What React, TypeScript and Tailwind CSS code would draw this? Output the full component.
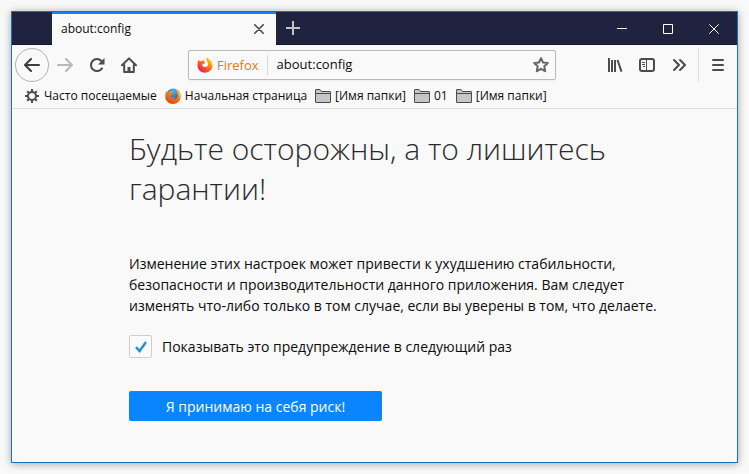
import React, { useState } from "react";

function FirefoxClassicIcon() {
  return (
    <svg viewBox="0 0 16 16" className="size-4 shrink-0" aria-hidden="true">
      <defs>
        <linearGradient id="foxBody" x1="0.8" y1="0" x2="0.3" y2="1">
          <stop offset="0" stopColor="#ffc21a" />
          <stop offset="0.4" stopColor="#f58220" />
          <stop offset="1" stopColor="#d9451c" />
        </linearGradient>
        <radialGradient id="foxGlobe" cx="0.5" cy="0.2" r="0.9">
          <stop offset="0" stopColor="#4fb4ee" />
          <stop offset="1" stopColor="#153a86" />
        </radialGradient>
      </defs>
      <circle cx="8.2" cy="7.4" r="7" fill="url(#foxGlobe)" />
      <path d="M1 3.2 2.4 4.4C3.4 3.6 4.6 3.4 5.6 3.6L7 2.6 6.9 4.3 8.2 5.6 6.5 6.7 5.8 8C6 9.6 8 9.7 9.4 9 10.2 9.1 9.8 10.6 8.4 11.2 11 11.4 13 9.7 12.8 6.8 12.5 4.6 11.5 3 10 1.6 13.6 2.2 15.9 5 15.9 8.4 15.9 12.6 12.3 15.9 8 15.9S.2 12.7.2 8.4C.2 6.4.5 4.8 1 3.2Z" fill="url(#foxBody)" />
      <path d="M13.4 3.6c1.6 2 1.8 4.8.7 7 .1-2.4-.1-4.7-.7-7Z" fill="#ffe04d" />
    </svg>
  );
}

function FirefoxQuantumIcon() {
  return (
    <svg viewBox="0 0 16 16" className="size-4 shrink-0" aria-hidden="true">
      <defs>
        <linearGradient id="flame" x1="0.9" y1="0.1" x2="0.2" y2="0.9">
          <stop offset="0" stopColor="#ffd000" />
          <stop offset="0.45" stopColor="#ff7a1a" />
          <stop offset="1" stopColor="#f0195c" />
        </linearGradient>
      </defs>
      <path d="M1.5 3 3 4.4C3.8 3.9 4.6 3.8 5.4 4L7.2 2.6 7 4.4 8.6 5.6 7 6.8 5.4 7.6C5.2 9.6 7.2 10.6 9 9.9 10.8 9.2 11.6 7.4 10.8 5.6 10.4 4.6 9.6 4 9.4 2.6 9.4 1.6 10 .8 10.6.4 11 2.2 12.8 2.6 14 4.2 16.2 7.2 16 11 13.4 13.6 10.4 16.4 5.4 16.3 2.5 13.4 0 10.8-.1 6.2 1.5 3Z" fill="url(#flame)" />
      <path d="M10.6.4C11 2.2 12.8 2.6 14 4.2c1.2 1.7 1.6 3.6 1.3 5.4C14.6 6.4 12.6 5.6 11.4 4 10.6 2.8 10 1.8 10.6.4Z" fill="#ffc400" />
    </svg>
  );
}

function FolderIcon() {
  return (
    <svg viewBox="0 0 16 14" className="h-3.5 w-4 shrink-0" fill="#c6c6c6" stroke="#4a4a4a" aria-hidden="true">
      <path d="M.5 13V1Q.5.5 1 .5H5L6.5 2.5H15Q15.5 2.5 15.5 3V13Q15.5 13.5 15 13.5H1Q.5 13.5.5 13Z" />
      <path d="M1 4.5H15" fill="none" />
    </svg>
  );
}

function GearIcon() {
  return (
    <svg viewBox="0 0 16 16" className="size-4 shrink-0" fill="none" stroke="#4a4a4a" aria-hidden="true">
      <circle cx="8" cy="8" r="4" strokeWidth="2" />
      <path strokeWidth="2" d="M8 1v2.4M8 12.6V15M1 8h2.4M12.6 8H15M3.2 3.2 4.8 4.8M11.2 11.2l1.6 1.6M12.8 3.2l-1.6 1.6M4.8 11.2l-1.6 1.6" />
    </svg>
  );
}

function ToolButton({ label, className = "", children }: { label: string; className?: string; children: React.ReactNode }) {
  return (
    <button type="button" aria-label={label} className={`flex h-8 w-8 shrink-0 items-center justify-center text-[#4a4a4f] ${className}`}>
      <svg viewBox="0 0 16 16" className="size-4" fill="none" stroke="currentColor" strokeWidth="2" strokeLinecap="round" strokeLinejoin="round" aria-hidden="true">
        {children}
      </svg>
    </button>
  );
}

function CaptionButton({ label, children }: { label: string; children: React.ReactNode }) {
  return (
    <button type="button" aria-label={label} className="flex h-full w-[46px] items-center justify-center pt-px text-white">
      <svg viewBox="0 0 10 10" className="size-2.5" fill="none" stroke="currentColor" aria-hidden="true">
        {children}
      </svg>
    </button>
  );
}

function TabBar() {
  return (
    <div className="flex h-[33px] border-b border-[#15172e] bg-[#202340]">
      <div className="-mb-px ml-10 flex w-56 items-center justify-between border-t-2 border-[#0a84ff] bg-[#f9f9fa] pr-[9px] pb-px pl-[9px]">
        <span className="text-xs text-[#0c0c0d]">about:config</span>
        <button type="button" aria-label="Закрыть вкладку" className="flex size-4 items-center justify-center">
          <svg viewBox="0 0 10 10" className="size-2.5" stroke="#4a4a4f" strokeWidth="1.6" strokeLinecap="round" aria-hidden="true">
            <path d="M.8.8l8.4 8.4M9.2.8.8 9.2" />
          </svg>
        </button>
      </div>
      <button type="button" aria-label="Новая вкладка" className="flex w-[34px] items-center justify-center">
        <svg viewBox="0 0 14 14" className="size-3.5" stroke="#c3c3c6" strokeWidth="2" aria-hidden="true">
          <path d="M7 0v14M0 7h14" />
        </svg>
      </button>
      <div className="ml-auto flex">
        <CaptionButton label="Свернуть"><path d="M0 4.5h10" /></CaptionButton>
        <CaptionButton label="Развернуть"><path d="M.5.5h9v9h-9z" /></CaptionButton>
        <CaptionButton label="Закрыть"><path d="M.3.3l9.4 9.4M9.7.3.3 9.7" /></CaptionButton>
      </div>
    </div>
  );
}

function NavBar() {
  return (
    <div className="flex h-10 items-center pl-[3px]">
      <button type="button" aria-label="Назад" className="flex size-[34px] shrink-0 items-center justify-center rounded-full border border-[#b1b1b3] text-[#3e3e42]">
        <svg viewBox="0 0 16 16" className="size-4" fill="none" stroke="currentColor" strokeWidth="2" strokeLinecap="round" strokeLinejoin="round" aria-hidden="true">
          <path d="M15 8H1.5M7 2 1 8l6 6" />
        </svg>
      </button>
      <ToolButton label="Вперёд" className="text-[#b8b8ba]"><path d="M1 8h13.5M9 2l6 6-6 6" /></ToolButton>
      <ToolButton label="Обновить">
        <path d="M13 11.4A6 6 0 1 1 12.4 4" />
        <path d="M15.5 1V7.5H9Z" fill="currentColor" stroke="none" />
      </ToolButton>
      <ToolButton label="Домой">
        <path d="M1 8.2 8 1.4l7 6.8M3.2 8v7h9.6V8" />
        <path d="M8 14.5V10" strokeWidth="3" strokeLinecap="butt" />
      </ToolButton>
      <div className="ml-[43px] flex h-[30px] min-w-0 flex-1 items-center rounded-xs border border-[#b9b9bb] bg-[#f9f9fa] px-2 shadow-xs">
        <FirefoxQuantumIcon />
        <span className="ml-1 border-r border-[#d7d7db] py-0.5 pr-2 text-[13px] leading-4 text-[#e57a10]">Firefox</span>
        <input aria-label="Адрес" defaultValue="about:config" className="min-w-0 flex-1 bg-transparent pl-[9px] text-[13px] text-[#0c0c0d] outline-none" />
        <button type="button" aria-label="Добавить в закладки" className="-mr-2 flex size-7 items-center justify-center">
          <svg viewBox="0 0 16 16" className="size-4" fill="none" stroke="#66666a" strokeWidth="2" strokeLinejoin="round" aria-hidden="true">
            <path d="M8 1.2 10 5.5l4.8.6-3.5 3.2.9 4.9L8 11.8l-4.2 2.4.9-4.9L1.2 6.1 6 5.5Z" />
          </svg>
        </button>
      </div>
      <div className="ml-[43px] flex shrink-0 items-center">
        <ToolButton label="Библиотека">
          <path d="M2 1v14M5 3v12M8 3v12M10.5 3l4 11.6" strokeLinecap="butt" />
        </ToolButton>
        <ToolButton label="Боковая панель">
          <rect x="1" y="2" width="14" height="12" rx="2" />
          <path d="M7.5 2v12" strokeWidth="1" />
          <path d="M3 5.5h3M3 7.5h3M4 9.5h2" strokeWidth="1" strokeLinecap="butt" />
        </ToolButton>
        <ToolButton label="Другие инструменты">
          <path d="M3 3l5 5-5 5M9 3l5 5-5 5" strokeWidth="2" />
        </ToolButton>
      </div>
      <div className="ml-[3px] flex h-[34px] items-center border-l border-[#dcdcde] pr-[3px] pl-[3px]">
        <ToolButton label="Меню">
          <path d="M3 3h10M3 8h10M3 13h10" />
        </ToolButton>
      </div>
    </div>
  );
}

function Bookmark({ icon, children }: { icon: React.ReactNode; children: React.ReactNode }) {
  return (
    <a href="#" className="flex items-center gap-1 whitespace-nowrap">
      {icon}
      <span>{children}</span>
    </a>
  );
}

function BookmarksBar() {
  return (
    <nav aria-label="Закладки" className="flex h-6 items-center gap-2 border-b border-[#dededf] pb-0.5 pl-3 text-xs text-[#0c0c0d]">
      <Bookmark icon={<GearIcon />}>Часто посещаемые</Bookmark>
      <Bookmark icon={<FirefoxClassicIcon />}>Начальная страница</Bookmark>
      <Bookmark icon={<FolderIcon />}>[Имя папки]</Bookmark>
      <Bookmark icon={<FolderIcon />}>01</Bookmark>
      <Bookmark icon={<FolderIcon />}>[Имя папки]</Bookmark>
    </nav>
  );
}

function Warning() {
  const [show, setShow] = useState(true);
  return (
    <main className="pt-5 pr-[62px] pb-[41px] pl-[117px] text-[#0c0c0d]">
      <h1 className="max-w-[500px] text-[30px] leading-10 font-light text-[#2a2a2e]">
        Будьте осторожны, а то лишитесь гарантии!
      </h1>
      <p className="mt-11 text-[14px] leading-[21px]">
        Изменение этих настроек может привести к ухудшению стабильности, безопасности и производительности данного приложения. Вам следует изменять что-либо только в том случае, если вы уверены в том, что делаете.
      </p>
      <div className="mt-[19px] flex items-center gap-2.5">
        <span className="grid size-[23px] shrink-0">
          <input
            id="show-again"
            type="checkbox"
            checked={show}
            onChange={(e) => setShow(e.target.checked)}
            className="peer col-start-1 row-start-1 size-[23px] appearance-none rounded-xs border border-[#cfcfd1] bg-[#fbfbfb]"
          />
          <svg viewBox="0 0 12 12" className="pointer-events-none invisible col-start-1 row-start-1 size-3 place-self-center peer-checked:visible" fill="none" stroke="#2292d8" strokeWidth="2.4" aria-hidden="true">
            <path d="M1 6.2 4.6 10 11 1" />
          </svg>
        </span>
        <label htmlFor="show-again" className="text-[14px] leading-[21px]">Показывать это предупреждение в следующий раз</label>
      </div>
      <button type="button" className="mt-[33px] h-[30px] w-[253px] rounded-xs bg-[#0a84ff] text-[14px] text-white">
        Я принимаю на себя риск!
      </button>
    </main>
  );
}

export default function App() {
  return (
    <div className="min-h-screen bg-[#f9f9fa] p-[11px] font-['Open_Sans','Noto_Sans',sans-serif]">
      <div className="border border-[#1a72bb] bg-[#f9f9f9] shadow-[0_1px_8px_rgba(0,0,0,0.35)]">
        <TabBar />
        <NavBar />
        <BookmarksBar />
        <Warning />
      </div>
    </div>
  );
}
